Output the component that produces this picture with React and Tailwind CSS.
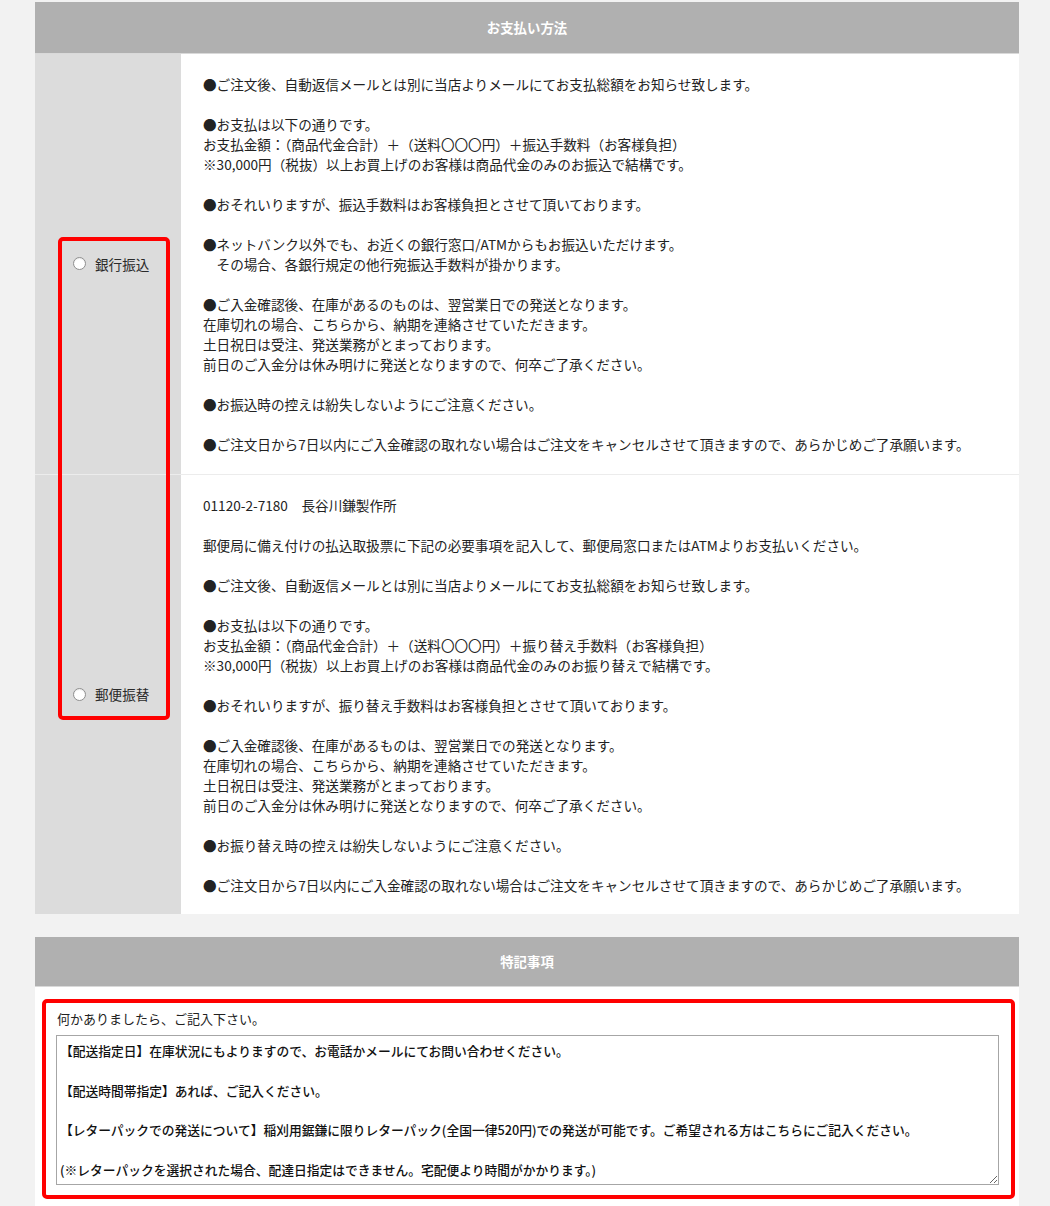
import React from "react";

const font = { fontFamily: '"Noto Sans CJK JP", "Noto Sans", sans-serif' };

function Radio({ label }) {
  return (
    <div className="flex items-center">
      <span className="w-[13px] h-[13px] rounded-full border border-[#8e8e8e] bg-white shadow-[inset_0_1px_1px_rgba(0,0,0,0.08)]" />
      <span className="ml-[9px] text-[13.6px] text-[#2a2a2a]">{label}</span>
    </div>
  );
}

function Block({ lines }) {
  return (
    <div>
      {lines.map((l, i) => (
        <div key={i}>{l}</div>
      ))}
    </div>
  );
}

export default function App() {
  const bank = [
    ["●ご注文後、自動返信メールとは別に当店よりメールにてお支払総額をお知らせ致します。"],
    [
      "●お支払は以下の通りです。",
      "お支払金額：（商品代金合計）＋（送料〇〇〇円）＋振込手数料（お客様負担）",
      "※30,000円（税抜）以上お買上げのお客様は商品代金のみのお振込で結構です。",
    ],
    ["●おそれいりますが、振込手数料はお客様負担とさせて頂いております。"],
    [
      "●ネットバンク以外でも、お近くの銀行窓口/ATMからもお振込いただけます。",
      "　その場合、各銀行規定の他行宛振込手数料が掛かります。",
    ],
    [
      "●ご入金確認後、在庫があるのものは、翌営業日での発送となります。",
      "在庫切れの場合、こちらから、納期を連絡させていただきます。",
      "土日祝日は受注、発送業務がとまっております。",
      "前日のご入金分は休み明けに発送となりますので、何卒ご了承ください。",
    ],
    ["●お振込時の控えは紛失しないようにご注意ください。"],
    ["●ご注文日から7日以内にご入金確認の取れない場合はご注文をキャンセルさせて頂きますので、あらかじめご了承願います。"],
  ];
  const post = [
    ["01120-2-7180　長谷川鎌製作所"],
    ["郵便局に備え付けの払込取扱票に下記の必要事項を記入して、郵便局窓口またはATMよりお支払いください。"],
    ["●ご注文後、自動返信メールとは別に当店よりメールにてお支払総額をお知らせ致します。"],
    [
      "●お支払は以下の通りです。",
      "お支払金額：（商品代金合計）＋（送料〇〇〇円）＋振り替え手数料（お客様負担）",
      "※30,000円（税抜）以上お買上げのお客様は商品代金のみのお振り替えで結構です。",
    ],
    ["●おそれいりますが、振り替え手数料はお客様負担とさせて頂いております。"],
    [
      "●ご入金確認後、在庫があるものは、翌営業日での発送となります。",
      "在庫切れの場合、こちらから、納期を連絡させていただきます。",
      "土日祝日は受注、発送業務がとまっております。",
      "前日のご入金分は休み明けに発送となりますので、何卒ご了承ください。",
    ],
    ["●お振り替え時の控えは紛失しないようにご注意ください。"],
    ["●ご注文日から7日以内にご入金確認の取れない場合はご注文をキャンセルさせて頂きますので、あらかじめご了承願います。"],
  ];

  const note =
    "【配送指定日】在庫状況にもよりますので、お電話かメールにてお問い合わせください。\n\n【配送時間帯指定】あれば、ご記入ください。\n\n【レターパックでの発送について】稲刈用鋸鎌に限りレターパック(全国一律520円)での発送が可能です。ご希望される方はこちらにご記入ください。\n\n(※レターパックを選択された場合、配達日指定はできません。宅配便より時間がかかります。)";

  return (
    <div className="min-h-[1206px] bg-[#f2f2f2] pt-[2px]" style={font}>
      <div className="ml-[35px] w-[984px]">
        <section className="relative">
          <div className="h-[52px] bg-[#b0b0b0] border-b border-[#d9d9d9] flex items-center justify-center text-white font-bold text-[13.4px]">
            お支払い方法
          </div>
          <div className="flex">
            <div className="w-[146px] bg-[#dcdcdc] flex items-center pl-[38px]">
              <Radio label="銀行振込" />
            </div>
            <div className="flex-1 bg-white px-[22px] py-[20px] text-[13.6px] leading-[20px] text-[#222] flex flex-col gap-[20px]">
              {bank.map((b, i) => (
                <Block key={i} lines={b} />
              ))}
            </div>
          </div>
          <div className="flex border-t border-[#ececec]">
            <div className="w-[146px] bg-[#dcdcdc] flex items-center pl-[38px]">
              <Radio label="郵便振替" />
            </div>
            <div className="flex-1 bg-white px-[22px] pt-[20px] pb-[19px] text-[13.6px] leading-[20px] text-[#222] flex flex-col gap-[20px]">
              {post.map((b, i) => (
                <Block key={i} lines={b} />
              ))}
            </div>
          </div>
          <div className="absolute left-[23px] top-[235px] w-[112px] h-[483px] border-[4px] border-[#ff0000] rounded-[5px] pointer-events-none" />
        </section>

        <section className="relative mt-[23px]">
          <div className="h-[50px] bg-[#b0b0b0] border-b border-[#d9d9d9] flex items-center justify-center text-white font-bold text-[13.4px]">
            特記事項
          </div>
          <div className="bg-white pl-[21px] pr-[20px] pt-[22px] pb-[24px]">
            <div className="text-[13px] leading-[20px] text-[#222] pl-[1px]">何かありましたら、ご記入下さい。</div>
            <textarea
              readOnly
              defaultValue={note}
              className="mt-[6px] block w-[943px] h-[150px] border border-[#a6a6a6] bg-white pt-[5px] px-[3px] text-[12.75px] leading-[19.8px] font-medium text-[#111] outline-none"
              style={font}
            />
          </div>
          <div className="absolute left-[7px] top-[62px] w-[973px] h-[200px] border-[4px] border-[#ff0000] rounded-[5px] pointer-events-none" />
        </section>
      </div>
    </div>
  );
}
